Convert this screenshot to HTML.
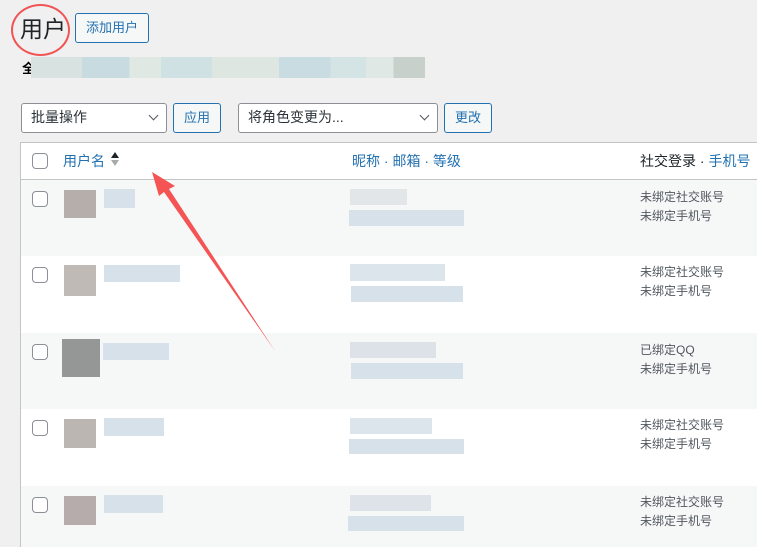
<!DOCTYPE html>
<html><head><meta charset="utf-8"><style>
*{margin:0;padding:0;box-sizing:border-box}
body{width:757px;height:547px;overflow:hidden;background:#f0f0f1;font-family:"Liberation Sans","Noto Sans CJK SC",sans-serif;position:relative;color:#3c434a}
.a{position:absolute}
.b{position:absolute;background:#d6e1ea}
.btn{position:absolute;border:1px solid #2271b1;border-radius:3px;color:#2271b1;font-size:13px;background:#f6f7f7;text-align:center}
.sel{position:absolute;border:1px solid #8c8f94;border-radius:3px;background:#fff;font-size:14px;color:#2c3338;padding-left:9px;line-height:27px}
.sel:after{content:"";position:absolute;right:9px;top:8px;width:6px;height:6px;border-right:1.6px solid #50575e;border-bottom:1.6px solid #50575e;transform:rotate(45deg)}
.cb{position:absolute;left:32px;width:16px;height:16px;border:1px solid #8c8f94;border-radius:4px;background:#fff}
.row{position:absolute;left:20px;width:740px}
.s{position:absolute;left:640px;font-size:12px;color:#50575e;line-height:19px}
</style></head><body>
<div class="a" style="left:20px;top:10px;font-size:23px;color:#1d2327">用户</div>
<div class="a" style="left:11px;top:4px;width:59px;height:52px;border:2.5px solid #f05454;border-radius:50%"></div>
<div class="btn" style="left:75px;top:13px;width:74px;height:30px;line-height:28px">添加用户</div>
<div class="a" style="left:22px;top:58px;font-size:13px;font-weight:bold;color:#000">全</div>
<div class="a" style="left:31px;top:57px;width:394px;height:21px;background:linear-gradient(90deg,#d8e2e0 0 13%,#c8dbe0 13% 25%,#e0e8e4 25% 33%,#d0e1e3 33% 46%,#dee6e2 46% 63%,#c8dce2 63% 76%,#d4e3e4 76% 85%,#e0e8e6 85% 92%,#c8d0cc 92%)"></div>
<div class="sel" style="left:21px;top:103px;width:146px;height:30px">批量操作</div>
<div class="btn" style="left:173px;top:103px;width:48px;height:30px;line-height:28px">应用</div>
<div class="sel" style="left:238px;top:103px;width:200px;height:30px">将角色变更为...</div>
<div class="btn" style="left:444px;top:103px;width:48px;height:30px;line-height:28px">更改</div>
<div class="row" style="top:142px;height:38px;background:#fff;border:1px solid #c3c4c7;border-right:none"></div>
<div class="cb" style="top:153px"></div>
<div class="a" style="left:63px;top:151px;font-size:14px;color:#2271b1">用户名</div>
<div class="a" style="left:111px;top:152px;width:0;height:0;border:4px solid transparent;border-bottom:6px solid #1d2327;border-top:none"></div>
<div class="a" style="left:111px;top:160px;width:0;height:0;border:4px solid transparent;border-top:6px solid #a7aaad;border-bottom:none"></div>
<div class="a" style="left:352px;top:151px;font-size:14px;color:#2271b1">昵称 · 邮箱 · 等级</div>
<div class="a" style="left:640px;top:151px;font-size:14px;color:#1d2327;white-space:nowrap">社交登录 · <span style="color:#2271b1">手机号</span></div>
<div class="row" style="top:180px;height:76px;background:#f6f7f7;border-left:1px solid #c3c4c7"></div>
<div class="row" style="top:256px;height:77px;background:#fff;border-left:1px solid #c3c4c7"></div>
<div class="row" style="top:333px;height:76px;background:#f6f7f7;border-left:1px solid #c3c4c7"></div>
<div class="row" style="top:409px;height:77px;background:#fff;border-left:1px solid #c3c4c7"></div>
<div class="row" style="top:486px;height:61px;background:#f6f7f7;border-left:1px solid #c3c4c7"></div>

<div class="cb" style="top:191px"></div><div class="a" style="left:64px;top:190px;width:32px;height:28px;background:#b5aeab"></div><div class="b" style="left:104px;top:189px;width:31px;height:19px"></div>
<div class="b" style="left:350px;top:189px;width:57px;height:16px;background:#e2e6e8"></div><div class="b" style="left:349px;top:210px;width:115px;height:16px"></div>
<div class="s" style="top:188px">未绑定社交账号<br>未绑定手机号</div>

<div class="cb" style="top:267px"></div><div class="a" style="left:64px;top:265px;width:32px;height:31px;background:#bfbab6"></div><div class="b" style="left:104px;top:265px;width:76px;height:17px"></div>
<div class="b" style="left:350px;top:264px;width:95px;height:17px;background:#dde5ec"></div><div class="b" style="left:351px;top:286px;width:112px;height:16px"></div>
<div class="s" style="top:263px">未绑定社交账号<br>未绑定手机号</div>

<div class="cb" style="top:344px"></div><div class="a" style="left:62px;top:339px;width:38px;height:38px;background:#959796"></div><div class="b" style="left:103px;top:343px;width:66px;height:17px"></div>
<div class="b" style="left:350px;top:342px;width:86px;height:16px;background:#dde2e8"></div><div class="b" style="left:351px;top:363px;width:112px;height:16px"></div>
<div class="s" style="top:341px">已绑定QQ<br>未绑定手机号</div>

<div class="cb" style="top:420px"></div><div class="a" style="left:64px;top:419px;width:32px;height:29px;background:#bcb6b2"></div><div class="b" style="left:104px;top:418px;width:60px;height:18px"></div>
<div class="b" style="left:350px;top:418px;width:82px;height:16px;background:#dde5ec"></div><div class="b" style="left:349px;top:439px;width:115px;height:15px"></div>
<div class="s" style="top:416px">未绑定社交账号<br>未绑定手机号</div>

<div class="cb" style="top:497px"></div><div class="a" style="left:64px;top:496px;width:32px;height:29px;background:#b5acab"></div><div class="b" style="left:104px;top:495px;width:59px;height:18px"></div>
<div class="b" style="left:350px;top:495px;width:81px;height:16px;background:#dde3e8"></div><div class="b" style="left:348px;top:516px;width:116px;height:15px"></div>
<div class="s" style="top:493px">未绑定社交账号<br>未绑定手机号</div>

<svg class="a" style="left:0;top:0" width="757" height="547"><polygon points="152,172 175,186 169,189 275,351 164,192 159,196" fill="#f45454"/></svg>
</body></html>
